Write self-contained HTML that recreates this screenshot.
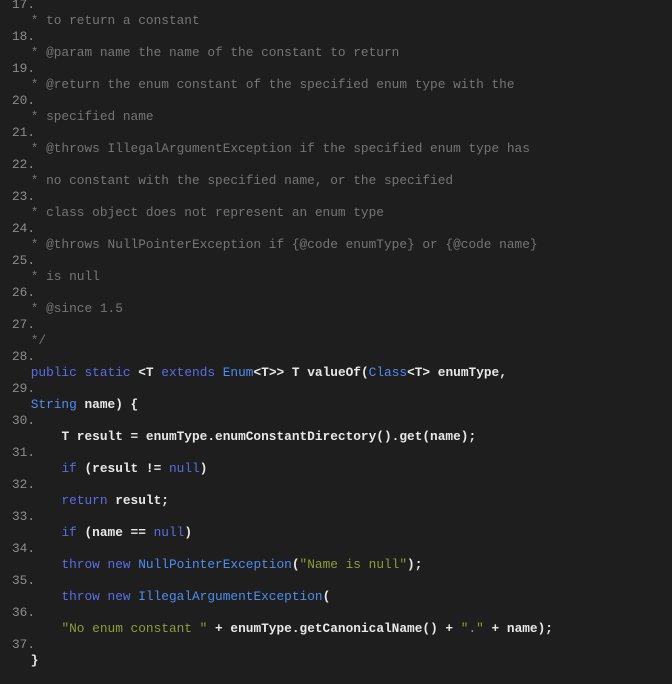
<!DOCTYPE html><html><head><style>
body{margin:0;background:#1e1e1e;width:672px;height:684px;overflow:hidden}
pre{margin:0;position:absolute;left:0;top:-3px;font-family:"Liberation Mono",monospace;font-size:12.8px;line-height:16px;color:#e0e0e0}
.n{color:#8c8c8c;padding-left:12px}
.c{color:#757575}
.k{color:#5b6de6}
.t{color:#4f8df0}
.s{color:#8e9c3c}
.p{font-weight:bold;color:#e8e8e8}
</style></head><body><pre><span class="n">17.</span>
    <span class="c">* to return a constant</span>
<span class="n">18.</span>
    <span class="c">* @param name the name of the constant to return</span>
<span class="n">19.</span>
    <span class="c">* @return the enum constant of the specified enum type with the</span>
<span class="n">20.</span>
    <span class="c">* specified name</span>
<span class="n">21.</span>
    <span class="c">* @throws IllegalArgumentException if the specified enum type has</span>
<span class="n">22.</span>
    <span class="c">* no constant with the specified name, or the specified</span>
<span class="n">23.</span>
    <span class="c">* class object does not represent an enum type</span>
<span class="n">24.</span>
    <span class="c">* @throws NullPointerException if {@code enumType} or {@code name}</span>
<span class="n">25.</span>
    <span class="c">* is null</span>
<span class="n">26.</span>
    <span class="c">* @since 1.5</span>
<span class="n">27.</span>
    <span class="c">*/</span>
<span class="n">28.</span>
    <span class="k">public static</span> <span class="p">&lt;T</span> <span class="k">extends</span> <span class="t">Enum</span><span class="p">&lt;T&gt;&gt; T valueOf(</span><span class="t">Class</span><span class="p">&lt;T&gt; enumType,</span>
<span class="n">29.</span>
    <span class="t">String</span> <span class="p">name) {</span>
<span class="n">30.</span>
        <span class="p">T result = enumType.enumConstantDirectory().get(name);</span>
<span class="n">31.</span>
        <span class="k">if</span> <span class="p">(result != </span><span class="k">null</span><span class="p">)</span>
<span class="n">32.</span>
        <span class="k">return</span> <span class="p">result;</span>
<span class="n">33.</span>
        <span class="k">if</span> <span class="p">(name == </span><span class="k">null</span><span class="p">)</span>
<span class="n">34.</span>
        <span class="k">throw new</span> <span class="t">NullPointerException</span><span class="p">(</span><span class="s">"Name is null"</span><span class="p">);</span>
<span class="n">35.</span>
        <span class="k">throw new</span> <span class="t">IllegalArgumentException</span><span class="p">(</span>
<span class="n">36.</span>
        <span class="s">"No enum constant "</span> <span class="p">+ enumType.getCanonicalName() +</span> <span class="s">"."</span> <span class="p">+ name);</span>
<span class="n">37.</span>
    <span class="p">}</span>
</pre></body></html>
